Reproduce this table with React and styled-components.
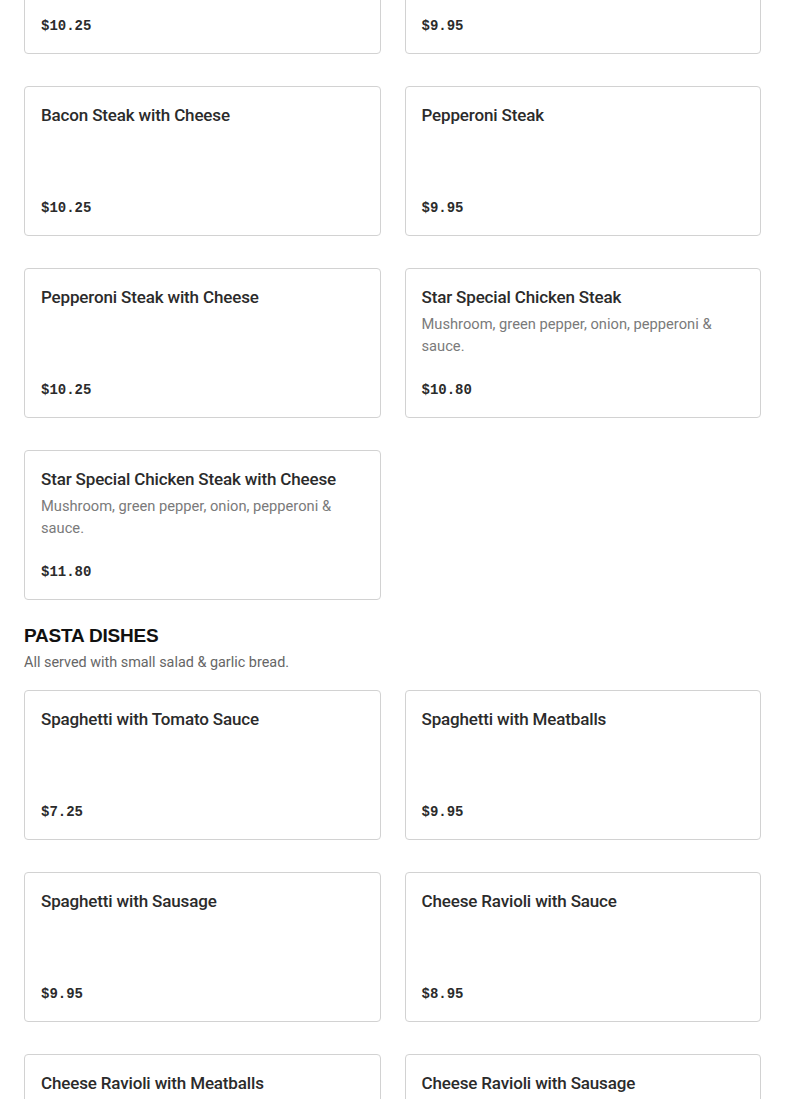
import React from 'react';
import styled, { createGlobalStyle } from 'styled-components';

const GlobalStyle = createGlobalStyle`
  html, body {
    margin: 0;
    padding: 0;
    background: #fff;
    overflow: hidden;
  }
  body {
    font-family: Roboto, "Liberation Sans", sans-serif;
    color: #2b2b2b;
  }
`;

const Page = styled.div`
  padding: 0 24px;
  margin-top: -96px;
  height: 1195px;
  overflow: hidden;
`;

const Section = styled.section`
  display: flex;
  flex-direction: column;
  margin-bottom: 24px;
`;

const SectionTitle = styled.h2`
  margin: 0;
  font-family: "Liberation Sans", Arial, sans-serif;
  font-weight: 900;
  font-size: 19px;
  line-height: 24px;
  color: #111;
  text-transform: uppercase;
  letter-spacing: -0.2px;
`;

const SectionNote = styled.p`
  margin: 4px 0 16px;
  font-size: 14.4px;
  line-height: 22px;
  color: #666;
`;

const Grid = styled.div`
  display: grid;
  grid-template-columns: 1fr 1fr;
  column-gap: 24px;
  row-gap: 32px;
`;

const Card = styled.div`
  display: flex;
  flex-direction: column;
  height: 150px;
  box-sizing: border-box;
  padding: 16px;
  border: 1px solid #d2d2d2;
  border-radius: 4px;
  background: #fff;
`;

const ItemName = styled.div`
  font-size: 17px;
  line-height: 24px;
  font-weight: 500;
  letter-spacing: -0.15px;
  color: #2b2b2b;
`;

const ItemDesc = styled.div`
  margin-top: 4px;
  font-size: 14.7px;
  line-height: 22px;
  color: #7a7a7a;
`;

const Price = styled.div`
  margin-top: auto;
  font-family: "Liberation Mono", "DejaVu Sans Mono", monospace;
  font-weight: 700;
  font-size: 14px;
  line-height: 22px;
  color: #2b2b2b;
`;

const specialDesc = 'Mushroom, green pepper, onion, pepperoni & sauce.';

const steaks = [
  { name: 'Mushroom Steak with Cheese', price: '$10.25' },
  { name: 'Bacon Steak', price: '$9.95' },
  { name: 'Bacon Steak with Cheese', price: '$10.25' },
  { name: 'Pepperoni Steak', price: '$9.95' },
  { name: 'Pepperoni Steak with Cheese', price: '$10.25' },
  { name: 'Star Special Chicken Steak', desc: specialDesc, price: '$10.80' },
  { name: 'Star Special Chicken Steak with Cheese', desc: specialDesc, price: '$11.80' },
];

const pasta = [
  { name: 'Spaghetti with Tomato Sauce', price: '$7.25' },
  { name: 'Spaghetti with Meatballs', price: '$9.95' },
  { name: 'Spaghetti with Sausage', price: '$9.95' },
  { name: 'Cheese Ravioli with Sauce', price: '$8.95' },
  { name: 'Cheese Ravioli with Meatballs', price: '$10.25' },
  { name: 'Cheese Ravioli with Sausage', price: '$10.25' },
];

const MenuItem = ({ item }) => (
  <Card>
    <ItemName>{item.name}</ItemName>
    {item.desc && <ItemDesc>{item.desc}</ItemDesc>}
    <Price>{item.price}</Price>
  </Card>
);

export default function App() {
  return (
    <>
      <GlobalStyle />
      <Page>
        <Section>
          <Grid>
            {steaks.map(item => <MenuItem key={item.name} item={item} />)}
          </Grid>
        </Section>
        <Section>
          <SectionTitle>Pasta Dishes</SectionTitle>
          <SectionNote>All served with small salad &amp; garlic bread.</SectionNote>
          <Grid>
            {pasta.map(item => <MenuItem key={item.name} item={item} />)}
          </Grid>
        </Section>
      </Page>
    </>
  );
}
